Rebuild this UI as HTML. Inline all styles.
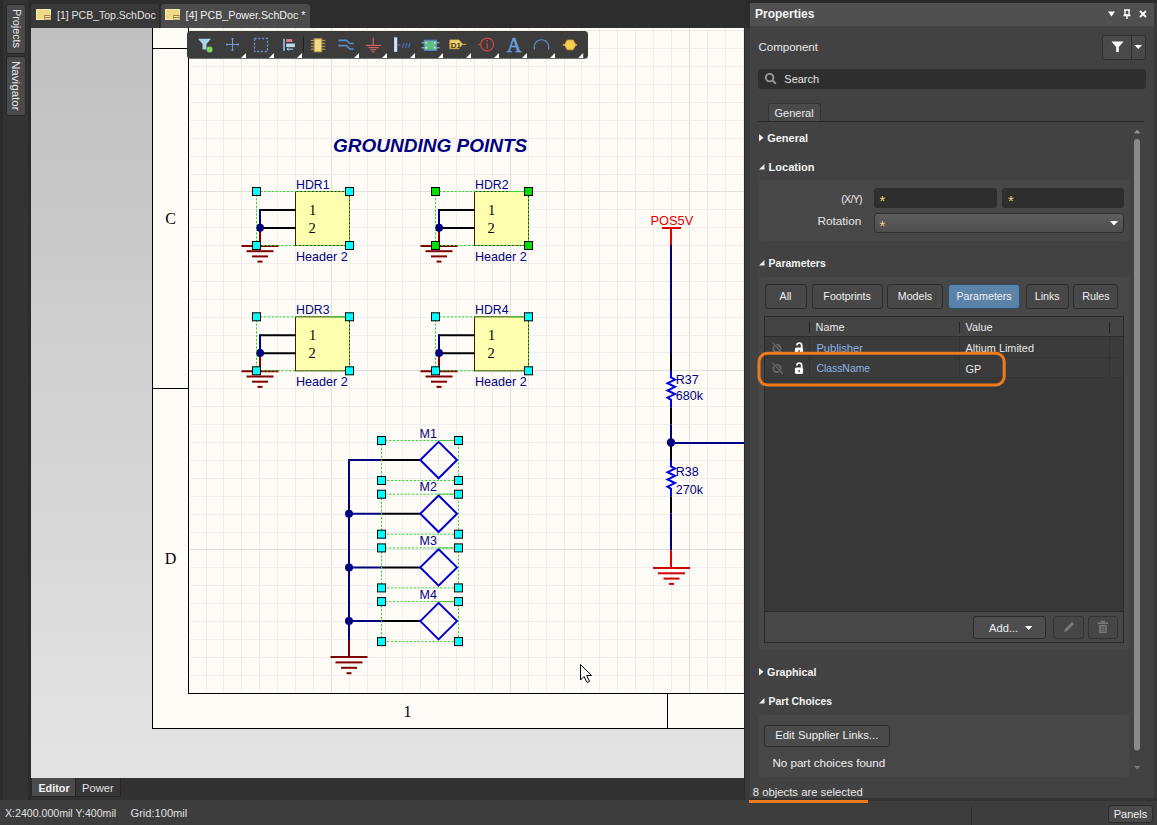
<!DOCTYPE html>
<html><head><meta charset="utf-8">
<style>
*{margin:0;padding:0;box-sizing:border-box}
html,body{width:1157px;height:825px;overflow:hidden;background:#2b2b2b;font-family:"Liberation Sans",sans-serif;color:#e8e8e8}
.a{position:absolute}
.t{position:absolute;white-space:pre;line-height:1}
.b{font-weight:bold}
.btn{position:absolute;background:#474747;border:1px solid #2b2b2b;border-radius:3px;color:#eee;font-size:11px;text-align:center;white-space:pre}
.sec{position:absolute;font-size:11px;font-weight:bold;color:#f2f2f2;white-space:pre;line-height:1}
</style></head><body>
<!-- left strip -->
<div class="a" style="left:0;top:0;width:31px;height:800px;background:#2b2b2b"></div>
<div class="a" style="left:3px;top:0;width:25px;height:800px;background:#333"></div>
<div class="a" style="left:6px;top:4px;width:20px;height:50px;background:#4a4a4a;border:1px solid #262626;border-radius:3px"></div>
<div class="a" style="left:6px;top:56px;width:20px;height:60px;background:#4a4a4a;border:1px solid #262626;border-radius:3px"></div>
<div class="t" style="left:21.5px;top:9px;font-size:10.8px;color:#e6e6e6;transform:rotate(90deg);transform-origin:0 0">Projects</div>
<div class="t" style="left:21.5px;top:60.5px;font-size:11.6px;color:#e6e6e6;transform:rotate(90deg);transform-origin:0 0">Navigator</div>
<!-- tab strip -->
<div class="a" style="left:31px;top:0;width:713px;height:28px;background:#2d2d2d"></div>
<div class="a" style="left:31px;top:4px;width:128px;height:24px;background:#383838;border-radius:3px 3px 0 0"></div>
<div class="a" style="left:161px;top:4px;width:149px;height:24px;background:#4b4b4b;border-radius:3px 3px 0 0"></div>
<svg class="a" style="left:36px;top:9px" width="15" height="11" viewBox="0 0 15 11"><rect x="0.5" y="0.5" width="14" height="10" fill="#efd888" stroke="#f7e9b0" stroke-width="1"/><rect x="8.2" y="6" width="6.3" height="4.5" fill="#9c7e44"/><path d="M9 7.5 H14 M9 9.5 H14" stroke="#f4e4a8" stroke-width="1.1"/></svg>
<div class="t" style="left:57px;top:10px;font-size:10.5px;color:#e4e4e4">[1] PCB_Top.SchDoc</div>
<svg class="a" style="left:165px;top:9px" width="15" height="11" viewBox="0 0 15 11"><rect x="0.5" y="0.5" width="14" height="10" fill="#efd888" stroke="#f7e9b0" stroke-width="1"/><rect x="8.2" y="6" width="6.3" height="4.5" fill="#9c7e44"/><path d="M9 7.5 H14 M9 9.5 H14" stroke="#f4e4a8" stroke-width="1.1"/></svg>
<div class="t" style="left:185.5px;top:10px;font-size:10.7px;color:#f0f0f0">[4] PCB_Power.SchDoc *</div>
<!-- schematic -->
<svg class="a" style="left:31px;top:28px" width="713" height="750" viewBox="31 28 713 750">
<defs><linearGradient id="bg" x1="0" y1="0" x2="0" y2="1"><stop offset="0" stop-color="#c0c0c0"/><stop offset="1" stop-color="#e4e4e4"/></linearGradient></defs>
<rect x="31" y="28" width="713" height="750" fill="url(#bg)"/>
<rect x="152" y="20" width="600" height="709" fill="#fffcf8"/>
<g shape-rendering="crispEdges"><line x1="206.5" y1="28" x2="206.5" y2="693" stroke="#efedea"/><line x1="223.5" y1="28" x2="223.5" y2="693" stroke="#efedea"/><line x1="241.5" y1="28" x2="241.5" y2="693" stroke="#efedea"/><line x1="259.5" y1="28" x2="259.5" y2="693" stroke="#efedea"/><line x1="277.5" y1="28" x2="277.5" y2="693" stroke="#efedea"/><line x1="295.5" y1="28" x2="295.5" y2="693" stroke="#efedea"/><line x1="313.5" y1="28" x2="313.5" y2="693" stroke="#efedea"/><line x1="331.5" y1="28" x2="331.5" y2="693" stroke="#e1dfdb"/><line x1="349.5" y1="28" x2="349.5" y2="693" stroke="#efedea"/><line x1="367.5" y1="28" x2="367.5" y2="693" stroke="#efedea"/><line x1="385.5" y1="28" x2="385.5" y2="693" stroke="#efedea"/><line x1="402.5" y1="28" x2="402.5" y2="693" stroke="#efedea"/><line x1="420.5" y1="28" x2="420.5" y2="693" stroke="#efedea"/><line x1="438.5" y1="28" x2="438.5" y2="693" stroke="#efedea"/><line x1="456.5" y1="28" x2="456.5" y2="693" stroke="#efedea"/><line x1="474.5" y1="28" x2="474.5" y2="693" stroke="#efedea"/><line x1="492.5" y1="28" x2="492.5" y2="693" stroke="#efedea"/><line x1="510.5" y1="28" x2="510.5" y2="693" stroke="#e1dfdb"/><line x1="528.5" y1="28" x2="528.5" y2="693" stroke="#efedea"/><line x1="546.5" y1="28" x2="546.5" y2="693" stroke="#efedea"/><line x1="564.5" y1="28" x2="564.5" y2="693" stroke="#efedea"/><line x1="581.5" y1="28" x2="581.5" y2="693" stroke="#efedea"/><line x1="599.5" y1="28" x2="599.5" y2="693" stroke="#efedea"/><line x1="617.5" y1="28" x2="617.5" y2="693" stroke="#efedea"/><line x1="635.5" y1="28" x2="635.5" y2="693" stroke="#efedea"/><line x1="653.5" y1="28" x2="653.5" y2="693" stroke="#efedea"/><line x1="671.5" y1="28" x2="671.5" y2="693" stroke="#efedea"/><line x1="689.5" y1="28" x2="689.5" y2="693" stroke="#e1dfdb"/><line x1="707.5" y1="28" x2="707.5" y2="693" stroke="#efedea"/><line x1="725.5" y1="28" x2="725.5" y2="693" stroke="#efedea"/><line x1="743.5" y1="28" x2="743.5" y2="693" stroke="#efedea"/><line x1="188" y1="30.5" x2="744" y2="30.5" stroke="#efedea"/><line x1="188" y1="48.5" x2="744" y2="48.5" stroke="#efedea"/><line x1="188" y1="66.5" x2="744" y2="66.5" stroke="#efedea"/><line x1="188" y1="84.5" x2="744" y2="84.5" stroke="#efedea"/><line x1="188" y1="102.5" x2="744" y2="102.5" stroke="#efedea"/><line x1="188" y1="120.5" x2="744" y2="120.5" stroke="#efedea"/><line x1="188" y1="138.5" x2="744" y2="138.5" stroke="#efedea"/><line x1="188" y1="156.5" x2="744" y2="156.5" stroke="#efedea"/><line x1="188" y1="174.5" x2="744" y2="174.5" stroke="#efedea"/><line x1="188" y1="191.5" x2="744" y2="191.5" stroke="#e1dfdb"/><line x1="188" y1="209.5" x2="744" y2="209.5" stroke="#efedea"/><line x1="188" y1="227.5" x2="744" y2="227.5" stroke="#efedea"/><line x1="188" y1="245.5" x2="744" y2="245.5" stroke="#efedea"/><line x1="188" y1="263.5" x2="744" y2="263.5" stroke="#efedea"/><line x1="188" y1="281.5" x2="744" y2="281.5" stroke="#efedea"/><line x1="188" y1="299.5" x2="744" y2="299.5" stroke="#efedea"/><line x1="188" y1="317.5" x2="744" y2="317.5" stroke="#efedea"/><line x1="188" y1="335.5" x2="744" y2="335.5" stroke="#efedea"/><line x1="188" y1="352.5" x2="744" y2="352.5" stroke="#efedea"/><line x1="188" y1="370.5" x2="744" y2="370.5" stroke="#e1dfdb"/><line x1="188" y1="388.5" x2="744" y2="388.5" stroke="#efedea"/><line x1="188" y1="406.5" x2="744" y2="406.5" stroke="#efedea"/><line x1="188" y1="424.5" x2="744" y2="424.5" stroke="#efedea"/><line x1="188" y1="442.5" x2="744" y2="442.5" stroke="#efedea"/><line x1="188" y1="460.5" x2="744" y2="460.5" stroke="#efedea"/><line x1="188" y1="478.5" x2="744" y2="478.5" stroke="#efedea"/><line x1="188" y1="496.5" x2="744" y2="496.5" stroke="#efedea"/><line x1="188" y1="514.5" x2="744" y2="514.5" stroke="#efedea"/><line x1="188" y1="532.5" x2="744" y2="532.5" stroke="#efedea"/><line x1="188" y1="549.5" x2="744" y2="549.5" stroke="#e1dfdb"/><line x1="188" y1="567.5" x2="744" y2="567.5" stroke="#efedea"/><line x1="188" y1="585.5" x2="744" y2="585.5" stroke="#efedea"/><line x1="188" y1="603.5" x2="744" y2="603.5" stroke="#efedea"/><line x1="188" y1="621.5" x2="744" y2="621.5" stroke="#efedea"/><line x1="188" y1="639.5" x2="744" y2="639.5" stroke="#efedea"/><line x1="188" y1="657.5" x2="744" y2="657.5" stroke="#efedea"/><line x1="188" y1="675.5" x2="744" y2="675.5" stroke="#efedea"/></g>
<g stroke="#000" stroke-width="1.3" shape-rendering="crispEdges" fill="none">
<line x1="152.5" y1="20" x2="152.5" y2="728.5"/>
<line x1="152" y1="728.5" x2="744" y2="728.5"/>
<line x1="188.5" y1="20" x2="188.5" y2="693.5"/>
<line x1="188" y1="693.5" x2="744" y2="693.5"/>
<line x1="152" y1="48.5" x2="188" y2="48.5"/>
<line x1="152" y1="388.5" x2="188" y2="388.5"/>
<line x1="667.5" y1="693" x2="667.5" y2="728"/>
</g>
<g font-family="Liberation Serif" font-size="16" fill="#000" text-anchor="middle">
<text x="170.5" y="224">C</text><text x="170.5" y="564">D</text><text x="407.5" y="717">1</text>
</g>
<text x="333" y="151.6" font-family="Liberation Sans" font-weight="bold" font-style="italic" font-size="19" fill="#000080">GROUNDING POINTS</text>
<g transform="translate(0,0)"><rect x="295.5" y="191.5" width="54" height="54" fill="#ffffb0" stroke="#5a1500" stroke-width="1"/><line x1="260" y1="210" x2="295.5" y2="210" stroke="#000" stroke-width="2"/><line x1="260" y1="228" x2="295.5" y2="228" stroke="#000" stroke-width="2"/><line x1="260" y1="209" x2="260" y2="228" stroke="#000080" stroke-width="2"/><line x1="260" y1="227.5" x2="260" y2="246" stroke="#800000" stroke-width="2"/><line x1="241.5" y1="246.0" x2="278.5" y2="246.0" stroke="#800000" stroke-width="2"/><line x1="246.5" y1="251.2" x2="273.5" y2="251.2" stroke="#800000" stroke-width="2"/><line x1="252.0" y1="256.4" x2="268.0" y2="256.4" stroke="#800000" stroke-width="2"/><line x1="257.5" y1="261.6" x2="262.5" y2="261.6" stroke="#800000" stroke-width="2"/><circle cx="260" cy="227.8" r="4" fill="#000080"/><text x="296" y="189" font-family="Liberation Sans" font-size="12.3" fill="#000080">HDR1</text><text x="296" y="260.6" font-family="Liberation Sans" font-size="12.6" fill="#000080">Header 2</text><text x="309" y="214.8" font-family="Liberation Serif" font-size="14.5" fill="#000">1</text><text x="308.5" y="232.7" font-family="Liberation Serif" font-size="14.5" fill="#000">2</text><rect x="256.5" y="191.5" width="93" height="54" fill="none" stroke="#3ccf3c" stroke-width="1" stroke-dasharray="2.3 1.5"/><rect x="252.5" y="187.5" width="8" height="8" fill="#00ffff" stroke="#000" stroke-width="1"/><rect x="345.5" y="187.5" width="8" height="8" fill="#00ffff" stroke="#000" stroke-width="1"/><rect x="252.5" y="241.5" width="8" height="8" fill="#00ffff" stroke="#000" stroke-width="1"/><rect x="345.5" y="241.5" width="8" height="8" fill="#00ffff" stroke="#000" stroke-width="1"/></g>
<g transform="translate(179,0)"><rect x="295.5" y="191.5" width="54" height="54" fill="#ffffb0" stroke="#5a1500" stroke-width="1"/><line x1="260" y1="210" x2="295.5" y2="210" stroke="#000" stroke-width="2"/><line x1="260" y1="228" x2="295.5" y2="228" stroke="#000" stroke-width="2"/><line x1="260" y1="209" x2="260" y2="228" stroke="#000080" stroke-width="2"/><line x1="260" y1="227.5" x2="260" y2="246" stroke="#800000" stroke-width="2"/><line x1="241.5" y1="246.0" x2="278.5" y2="246.0" stroke="#800000" stroke-width="2"/><line x1="246.5" y1="251.2" x2="273.5" y2="251.2" stroke="#800000" stroke-width="2"/><line x1="252.0" y1="256.4" x2="268.0" y2="256.4" stroke="#800000" stroke-width="2"/><line x1="257.5" y1="261.6" x2="262.5" y2="261.6" stroke="#800000" stroke-width="2"/><circle cx="260" cy="227.8" r="4" fill="#000080"/><text x="296" y="189" font-family="Liberation Sans" font-size="12.3" fill="#000080">HDR2</text><text x="296" y="260.6" font-family="Liberation Sans" font-size="12.6" fill="#000080">Header 2</text><text x="309" y="214.8" font-family="Liberation Serif" font-size="14.5" fill="#000">1</text><text x="308.5" y="232.7" font-family="Liberation Serif" font-size="14.5" fill="#000">2</text><rect x="256.5" y="191.5" width="93" height="54" fill="none" stroke="#3ccf3c" stroke-width="1" stroke-dasharray="2.3 1.5"/><line x1="330.5" y1="191.5" x2="346" y2="191.5" stroke="#3ccf3c" stroke-width="1"/><rect x="252.5" y="187.5" width="8" height="8" fill="#00e000" stroke="#000" stroke-width="1"/><rect x="345.5" y="187.5" width="8" height="8" fill="#00e000" stroke="#000" stroke-width="1"/><rect x="252.5" y="241.5" width="8" height="8" fill="#00e000" stroke="#000" stroke-width="1"/><rect x="345.5" y="241.5" width="8" height="8" fill="#00e000" stroke="#000" stroke-width="1"/></g>
<g transform="translate(0,125.3)"><rect x="295.5" y="191.5" width="54" height="54" fill="#ffffb0" stroke="#5a1500" stroke-width="1"/><line x1="260" y1="210" x2="295.5" y2="210" stroke="#000" stroke-width="2"/><line x1="260" y1="228" x2="295.5" y2="228" stroke="#000" stroke-width="2"/><line x1="260" y1="209" x2="260" y2="228" stroke="#000080" stroke-width="2"/><line x1="260" y1="227.5" x2="260" y2="246" stroke="#800000" stroke-width="2"/><line x1="241.5" y1="246.0" x2="278.5" y2="246.0" stroke="#800000" stroke-width="2"/><line x1="246.5" y1="251.2" x2="273.5" y2="251.2" stroke="#800000" stroke-width="2"/><line x1="252.0" y1="256.4" x2="268.0" y2="256.4" stroke="#800000" stroke-width="2"/><line x1="257.5" y1="261.6" x2="262.5" y2="261.6" stroke="#800000" stroke-width="2"/><circle cx="260" cy="227.8" r="4" fill="#000080"/><text x="296" y="189" font-family="Liberation Sans" font-size="12.3" fill="#000080">HDR3</text><text x="296" y="260.6" font-family="Liberation Sans" font-size="12.6" fill="#000080">Header 2</text><text x="309" y="214.8" font-family="Liberation Serif" font-size="14.5" fill="#000">1</text><text x="308.5" y="232.7" font-family="Liberation Serif" font-size="14.5" fill="#000">2</text><rect x="256.5" y="191.5" width="93" height="54" fill="none" stroke="#3ccf3c" stroke-width="1" stroke-dasharray="2.3 1.5"/><line x1="330.5" y1="191.5" x2="346" y2="191.5" stroke="#3ccf3c" stroke-width="1"/><rect x="252.5" y="187.5" width="8" height="8" fill="#00ffff" stroke="#000" stroke-width="1"/><rect x="345.5" y="187.5" width="8" height="8" fill="#00ffff" stroke="#000" stroke-width="1"/><rect x="252.5" y="241.5" width="8" height="8" fill="#00ffff" stroke="#000" stroke-width="1"/><rect x="345.5" y="241.5" width="8" height="8" fill="#00ffff" stroke="#000" stroke-width="1"/></g>
<g transform="translate(179,125.3)"><rect x="295.5" y="191.5" width="54" height="54" fill="#ffffb0" stroke="#5a1500" stroke-width="1"/><line x1="260" y1="210" x2="295.5" y2="210" stroke="#000" stroke-width="2"/><line x1="260" y1="228" x2="295.5" y2="228" stroke="#000" stroke-width="2"/><line x1="260" y1="209" x2="260" y2="228" stroke="#000080" stroke-width="2"/><line x1="260" y1="227.5" x2="260" y2="246" stroke="#800000" stroke-width="2"/><line x1="241.5" y1="246.0" x2="278.5" y2="246.0" stroke="#800000" stroke-width="2"/><line x1="246.5" y1="251.2" x2="273.5" y2="251.2" stroke="#800000" stroke-width="2"/><line x1="252.0" y1="256.4" x2="268.0" y2="256.4" stroke="#800000" stroke-width="2"/><line x1="257.5" y1="261.6" x2="262.5" y2="261.6" stroke="#800000" stroke-width="2"/><circle cx="260" cy="227.8" r="4" fill="#000080"/><text x="296" y="189" font-family="Liberation Sans" font-size="12.3" fill="#000080">HDR4</text><text x="296" y="260.6" font-family="Liberation Sans" font-size="12.6" fill="#000080">Header 2</text><text x="309" y="214.8" font-family="Liberation Serif" font-size="14.5" fill="#000">1</text><text x="308.5" y="232.7" font-family="Liberation Serif" font-size="14.5" fill="#000">2</text><rect x="256.5" y="191.5" width="93" height="54" fill="none" stroke="#3ccf3c" stroke-width="1" stroke-dasharray="2.3 1.5"/><line x1="330.5" y1="191.5" x2="346" y2="191.5" stroke="#3ccf3c" stroke-width="1"/><rect x="252.5" y="187.5" width="8" height="8" fill="#00ffff" stroke="#000" stroke-width="1"/><rect x="345.5" y="187.5" width="8" height="8" fill="#00ffff" stroke="#000" stroke-width="1"/><rect x="252.5" y="241.5" width="8" height="8" fill="#00ffff" stroke="#000" stroke-width="1"/><rect x="345.5" y="241.5" width="8" height="8" fill="#00ffff" stroke="#000" stroke-width="1"/></g>
<line x1="349" y1="459" x2="349" y2="641" stroke="#000080" stroke-width="2"/>
<line x1="349" y1="640" x2="349" y2="657" stroke="#800000" stroke-width="2"/>
<line x1="330.5" y1="657.0" x2="367.5" y2="657.0" stroke="#800000" stroke-width="2"/><line x1="335.5" y1="662.4" x2="362.5" y2="662.4" stroke="#800000" stroke-width="2"/><line x1="341.0" y1="667.8" x2="357.0" y2="667.8" stroke="#800000" stroke-width="2"/><line x1="346.5" y1="673.2" x2="351.5" y2="673.2" stroke="#800000" stroke-width="2"/>
<g transform="translate(0,0.0)"><line x1="349" y1="460" x2="382" y2="460" stroke="#000080" stroke-width="2"/><line x1="381.5" y1="460" x2="420.5" y2="460" stroke="#000" stroke-width="2"/><path d="M420.3 460 L438.6 441.8 L457 460 L438.6 478.3 Z" fill="none" stroke="#0000d0" stroke-width="2"/><text x="419.6" y="437.7" font-family="Liberation Sans" font-size="12.5" fill="#000080">M1</text><rect x="381.5" y="440.5" width="77" height="40" fill="none" stroke="#3ccf3c" stroke-width="1" stroke-dasharray="2.3 1.5"/><line x1="438.6" y1="440.5" x2="455" y2="440.5" stroke="#3ccf3c" stroke-width="1"/><rect x="377.5" y="436.5" width="8" height="8" fill="#00ffff" stroke="#000" stroke-width="1"/><rect x="454.5" y="436.5" width="8" height="8" fill="#00ffff" stroke="#000" stroke-width="1"/><rect x="377.5" y="476.5" width="8" height="8" fill="#00ffff" stroke="#000" stroke-width="1"/><rect x="454.5" y="476.5" width="8" height="8" fill="#00ffff" stroke="#000" stroke-width="1"/></g>
<g transform="translate(0,53.7)"><line x1="349" y1="460" x2="382" y2="460" stroke="#000080" stroke-width="2"/><line x1="381.5" y1="460" x2="420.5" y2="460" stroke="#000" stroke-width="2"/><path d="M420.3 460 L438.6 441.8 L457 460 L438.6 478.3 Z" fill="none" stroke="#0000d0" stroke-width="2"/><text x="419.6" y="437.7" font-family="Liberation Sans" font-size="12.5" fill="#000080">M2</text><rect x="381.5" y="440.5" width="77" height="40" fill="none" stroke="#3ccf3c" stroke-width="1" stroke-dasharray="2.3 1.5"/><line x1="438.6" y1="440.5" x2="455" y2="440.5" stroke="#3ccf3c" stroke-width="1"/><rect x="377.5" y="436.5" width="8" height="8" fill="#00ffff" stroke="#000" stroke-width="1"/><rect x="454.5" y="436.5" width="8" height="8" fill="#00ffff" stroke="#000" stroke-width="1"/><rect x="377.5" y="476.5" width="8" height="8" fill="#00ffff" stroke="#000" stroke-width="1"/><rect x="454.5" y="476.5" width="8" height="8" fill="#00ffff" stroke="#000" stroke-width="1"/></g>
<g transform="translate(0,107.4)"><line x1="349" y1="460" x2="382" y2="460" stroke="#000080" stroke-width="2"/><line x1="381.5" y1="460" x2="420.5" y2="460" stroke="#000" stroke-width="2"/><path d="M420.3 460 L438.6 441.8 L457 460 L438.6 478.3 Z" fill="none" stroke="#0000d0" stroke-width="2"/><text x="419.6" y="437.7" font-family="Liberation Sans" font-size="12.5" fill="#000080">M3</text><rect x="381.5" y="440.5" width="77" height="40" fill="none" stroke="#3ccf3c" stroke-width="1" stroke-dasharray="2.3 1.5"/><line x1="438.6" y1="440.5" x2="455" y2="440.5" stroke="#3ccf3c" stroke-width="1"/><rect x="377.5" y="436.5" width="8" height="8" fill="#00ffff" stroke="#000" stroke-width="1"/><rect x="454.5" y="436.5" width="8" height="8" fill="#00ffff" stroke="#000" stroke-width="1"/><rect x="377.5" y="476.5" width="8" height="8" fill="#00ffff" stroke="#000" stroke-width="1"/><rect x="454.5" y="476.5" width="8" height="8" fill="#00ffff" stroke="#000" stroke-width="1"/></g>
<g transform="translate(0,161.10000000000002)"><line x1="349" y1="460" x2="382" y2="460" stroke="#000080" stroke-width="2"/><line x1="381.5" y1="460" x2="420.5" y2="460" stroke="#000" stroke-width="2"/><path d="M420.3 460 L438.6 441.8 L457 460 L438.6 478.3 Z" fill="none" stroke="#0000d0" stroke-width="2"/><text x="419.6" y="437.7" font-family="Liberation Sans" font-size="12.5" fill="#000080">M4</text><rect x="381.5" y="440.5" width="77" height="40" fill="none" stroke="#3ccf3c" stroke-width="1" stroke-dasharray="2.3 1.5"/><line x1="438.6" y1="440.5" x2="455" y2="440.5" stroke="#3ccf3c" stroke-width="1"/><rect x="377.5" y="436.5" width="8" height="8" fill="#00ffff" stroke="#000" stroke-width="1"/><rect x="454.5" y="436.5" width="8" height="8" fill="#00ffff" stroke="#000" stroke-width="1"/><rect x="377.5" y="476.5" width="8" height="8" fill="#00ffff" stroke="#000" stroke-width="1"/><rect x="454.5" y="476.5" width="8" height="8" fill="#00ffff" stroke="#000" stroke-width="1"/></g>
<circle cx="349" cy="513.7" r="4" fill="#000080"/>
<circle cx="349" cy="567.4" r="4" fill="#000080"/>
<circle cx="349" cy="621.1" r="4" fill="#000080"/>
<text x="650.5" y="225.1" font-family="Liberation Sans" font-size="12.8" fill="#e00000">POS5V</text>
<line x1="662" y1="228" x2="681" y2="228" stroke="#e00000" stroke-width="2"/>
<line x1="671" y1="227" x2="671" y2="245" stroke="#e00000" stroke-width="2"/>
<line x1="671" y1="245" x2="671" y2="354" stroke="#000080" stroke-width="2"/>
<g transform="translate(0,0)"><line x1="671" y1="353.6" x2="671" y2="371" stroke="#000" stroke-width="2"/><path d="M671 370.7 L671 377.5 L675 379.6 L667.5 383.2 L675 386.8 L667.5 390.5 L675 394.1 L667.5 397.7 L671 399.8 L671 407.3" fill="none" stroke="#0000e8" stroke-width="2" stroke-linejoin="miter"/><line x1="671" y1="407.2" x2="671" y2="424.5" stroke="#000" stroke-width="2"/><text x="675.8" y="383.6" font-family="Liberation Sans" font-size="12.5" fill="#000080">R37</text><text x="675.8" y="399.6" font-family="Liberation Sans" font-size="12.5" fill="#000080">680k</text></g>
<line x1="671" y1="424.5" x2="671" y2="442.5" stroke="#000080" stroke-width="2"/>
<line x1="671" y1="443" x2="744" y2="443" stroke="#000080" stroke-width="2"/>
<g transform="translate(0,89)"><line x1="671" y1="353.6" x2="671" y2="371" stroke="#000" stroke-width="2"/><path d="M671 370.7 L671 377.5 L675 379.6 L667.5 383.2 L675 386.8 L667.5 390.5 L675 394.1 L667.5 397.7 L671 399.8 L671 407.3" fill="none" stroke="#0000e8" stroke-width="2" stroke-linejoin="miter"/><line x1="671" y1="407.2" x2="671" y2="424.5" stroke="#000" stroke-width="2"/><text x="675.8" y="386.6" font-family="Liberation Sans" font-size="12.5" fill="#000080">R38</text><text x="675.8" y="404.6" font-family="Liberation Sans" font-size="12.5" fill="#000080">270k</text></g>
<line x1="671" y1="513.5" x2="671" y2="550.3" stroke="#000080" stroke-width="2"/>
<line x1="671" y1="550.3" x2="671" y2="568" stroke="#e00000" stroke-width="2"/>
<circle cx="671" cy="442.5" r="4.2" fill="#000080"/>
<line x1="653.0" y1="568.0" x2="690.0" y2="568.0" stroke="#d00000" stroke-width="2"/><line x1="658.0" y1="573.3" x2="685.0" y2="573.3" stroke="#d00000" stroke-width="2"/><line x1="663.5" y1="578.6" x2="679.5" y2="578.6" stroke="#d00000" stroke-width="2"/><line x1="669.0" y1="583.9" x2="674.0" y2="583.9" stroke="#d00000" stroke-width="2"/>
<path d="M580.5 664.5 L580.5 680 L584 676.5 L587 682.5 L589.5 681.3 L586.7 675.5 L591.5 675.5 Z" fill="#fff" stroke="#000" stroke-width="1" stroke-linejoin="round"/>
</svg>
<svg class="a" style="left:187px;top:31px" width="401" height="28" viewBox="187 31 401 28">
<rect x="187" y="31" width="401" height="27.7" rx="3.5" fill="#3c3c3c"/>
<!-- filter -->
<path d="M198 38.8 H211 L206.5 44 V49.5 H202.5 V44 Z" fill="#a8d4e6"/>
<circle cx="209.6" cy="49.6" r="3" fill="#7ed957"/>
<!-- move cross -->
<g stroke="#7b9ad2" stroke-width="1" fill="none"><line x1="226" y1="44.5" x2="239" y2="44.5"/><line x1="232.5" y1="38" x2="232.5" y2="51"/><path d="M227.3 43.3 L226 44.5 L227.3 45.7 M237.7 43.3 L239 44.5 L237.7 45.7 M231.3 39.3 L232.5 38 L233.7 39.3 M231.3 49.7 L232.5 51 L233.7 49.7"/></g>
<path d="M246 58 L246 53 L241 58 Z" fill="#fff"/>
<!-- dashed rect -->
<rect x="254.5" y="38.5" width="13" height="13" fill="none" stroke="#6d8fd0" stroke-width="1.3" stroke-dasharray="2.2 1.6"/>
<path d="M274 58 L274 53 L269 58 Z" fill="#fff"/>
<!-- align -->
<rect x="283" y="38.8" width="2" height="12" fill="#8aa2c4"/>
<rect x="286.2" y="39.1" width="6" height="2.8" fill="#e57e8c"/>
<rect x="286.2" y="43.5" width="8.7" height="3.6" fill="#b6dcec"/>
<path d="M287 49.2 H293 M287 49.2 L288.5 48 M287 49.2 L288.5 50.4" stroke="#b6dcec" stroke-width="1" fill="none"/>
<path d="M302 58 L302 53 L297 58 Z" fill="#fff"/>
<line x1="303.5" y1="36.7" x2="303.5" y2="52.8" stroke="#1e1e1e" stroke-width="1"/>
<!-- component -->
<g stroke="#c8a850" stroke-width="1"><line x1="310.8" y1="40.4" x2="325.3" y2="40.4"/><line x1="310.8" y1="43.3" x2="325.3" y2="43.3"/><line x1="310.8" y1="46.3" x2="325.3" y2="46.3"/><line x1="310.8" y1="49.2" x2="325.3" y2="49.2"/></g>
<rect x="314.2" y="38.8" width="7.5" height="13" fill="#f3d889" stroke="#b89a4a" stroke-width="1"/>
<!-- wire -->
<path d="M338.3 40.4 H346.6 L349.7 43.5 H353.8 M338.3 45.6 H346.6 L349.7 49 H353.8" stroke="#5a8cc4" stroke-width="1.6" fill="none"/>
<path d="M359 58 L359 53 L354 58 Z" fill="#fff"/>
<!-- gnd -->
<g stroke="#e06060" stroke-width="1.1"><line x1="373.2" y1="37.8" x2="373.2" y2="45.4"/><line x1="365.8" y1="45.4" x2="381.3" y2="45.4"/><line x1="368.4" y1="47.6" x2="378.7" y2="47.6"/><line x1="370.4" y1="49.7" x2="376.1" y2="49.7"/><line x1="372" y1="51.8" x2="374.6" y2="51.8"/></g>
<path d="M387 58 L387 53 L382 58 Z" fill="#fff"/>
<!-- bus entry -->
<rect x="394.1" y="37.3" width="3.1" height="14.5" fill="#cfe4fa"/>
<line x1="397.2" y1="45" x2="400.5" y2="45" stroke="#5a7cc0" stroke-width="1"/>
<path d="M402.5 47.6 L404 43 M405.5 47.6 L407 43 M408.5 47.6 L410 43" stroke="#4a6ab8" stroke-width="1.3" fill="none"/>
<path d="M415 58 L415 53 L410 58 Z" fill="#fff"/>
<!-- sheet symbol -->
<rect x="424.3" y="40.3" width="12.2" height="10" fill="#5fbf7f" stroke="#5a88c8" stroke-width="1.2"/>
<path d="M421.5 42.8 H424.5 M421.5 47.8 H424.5 M436.5 42.8 H439.5 M436.5 47.8 H439.5" stroke="#9cc4e8" stroke-width="1"/>
<path d="M425.5 41.5 L427.5 42.8 L425.5 44 Z M425.5 46.5 L427.5 47.8 L425.5 49 Z M435.5 41.5 L433.5 42.8 L435.5 44 Z M435.5 46.5 L433.5 47.8 L435.5 49 Z" fill="#e8f4ff"/>
<path d="M443 58 L443 53 L438 58 Z" fill="#fff"/>
<!-- port D1 -->
<path d="M449.8 39.9 H459 L462.5 44.3 L459 48.7 H449.8 Z" fill="#f1d06e" stroke="#c9a648" stroke-width="0.8"/>
<line x1="462.5" y1="44.3" x2="466" y2="44.3" stroke="#e0b850" stroke-width="1"/>
<text x="450.8" y="47.8" font-family="Liberation Sans" font-weight="bold" font-size="8" fill="#4a3a10">D1</text>
<path d="M471 58 L471 53 L466 58 Z" fill="#fff"/>
<!-- info -->
<circle cx="487.2" cy="44.5" r="6.4" fill="none" stroke="#d84848" stroke-width="1.1"/>
<line x1="478.4" y1="44.5" x2="480.8" y2="44.5" stroke="#d84848" stroke-width="1.1"/>
<line x1="487.2" y1="43.2" x2="487.2" y2="48.5" stroke="#d84848" stroke-width="1.3"/>
<circle cx="487.2" cy="40.9" r="0.8" fill="#d84848"/>
<path d="M499 58 L499 53 L494 58 Z" fill="#fff"/>
<!-- A -->
<text x="506.8" y="51.8" font-family="Liberation Serif" font-size="20.5" stroke="#6aa2e2" stroke-width="0.5" fill="#6aa2e2">A</text>
<path d="M527 58 L527 53 L522 58 Z" fill="#fff"/>
<!-- arc -->
<path d="M534.6 49.5 A7.3 7.3 0 1 1 548.4 49.5" fill="none" stroke="#5c8cc4" stroke-width="1.1"/>
<path d="M555 58 L555 53 L550 58 Z" fill="#fff"/>
<!-- junction -->
<line x1="562.8" y1="44.9" x2="577.1" y2="44.9" stroke="#f0a848" stroke-width="1.6"/>
<path d="M567.3 40 H573.1 L575.9 44.9 L573.1 49.8 H567.3 L564.5 44.9 Z" fill="#f7cd52" stroke="#e8a040" stroke-width="0.8"/>
<path d="M583.2 58 L583.2 53 L578.2 58 Z" fill="#fff"/>
</svg>
<!-- bottom tabs bar -->
<div class="a" style="left:31px;top:778px;width:713px;height:22px;background:#323232"></div>
<div class="a" style="left:31px;top:778px;width:45px;height:19px;background:#4b4b4b;border:1px solid #262626;border-top:none"></div>
<div class="a" style="left:75px;top:778px;width:46px;height:19px;background:#363636;border:1px solid #262626;border-top:none"></div>
<div class="t b" style="left:38.4px;top:783.4px;font-size:10.8px;color:#f4f4f4">Editor</div>
<div class="t" style="left:82px;top:783.4px;font-size:11.2px;color:#e4e4e4">Power</div>
<!-- status bar -->
<div class="a" style="left:0;top:800px;width:1157px;height:25px;background:#3d3d3d"></div>
<div class="t" style="left:5px;top:807.5px;font-size:10.6px;color:#e0e0e0">X:2400.000mil Y:400mil</div>
<div class="t" style="left:130.5px;top:807.5px;font-size:11.1px;color:#e0e0e0">Grid:100mil</div>
<div class="a" style="left:971px;top:805px;width:1px;height:20px;background:#2e2e2e"></div>
<div class="btn" style="left:1108px;top:805px;width:45px;height:18px;line-height:16px;background:#4a4a4a">Panels</div>
<!-- right gap -->
<div class="a" style="left:744px;top:0;width:6px;height:800px;background:#2b2b2b"></div>
<div class="a" style="left:745px;top:28px;width:5px;height:772px;background:#3a3a3a"></div>
<!-- panel -->
<div class="a" style="left:1154px;top:3px;width:3px;height:797px;background:#393939"></div>
<div class="a" style="left:750px;top:3px;width:404px;height:796px;background:#424242"></div>
<div class="a" style="left:750px;top:3px;width:404px;height:23px;background:#505050"></div>
<div class="t b" style="left:755px;top:8px;font-size:12px;color:#f4f4f4">Properties</div>
<svg class="a" style="left:1105px;top:8px" width="45" height="14" viewBox="1105 8 45 14">
<path d="M1108 11.5 H1115 L1111.5 16.5 Z" fill="#fff"/>
<path d="M1124 10 H1130 M1125 10 V15 H1129 V10 M1123.5 15.5 H1130.5 M1127 15.5 V19" stroke="#fff" stroke-width="1.4" fill="none"/>
<path d="M1140 11 L1146 17 M1146 11 L1140 17" stroke="#fff" stroke-width="1.8"/>
</svg>
<div class="t" style="left:758.5px;top:42px;font-size:11.5px;color:#eaeaea">Component</div>
<div class="a" style="left:1102px;top:34.5px;width:43.5px;height:25px;background:#4a4a4a;border:1px solid #2e2e2e;border-radius:3px"></div>
<div class="a" style="left:1131px;top:35px;width:1px;height:24px;background:#2e2e2e"></div>
<svg class="a" style="left:1102px;top:34px" width="44" height="26" viewBox="1102 34 44 26"><path d="M1111.5 41.5 H1123.5 L1118.8 47 V52 H1116.2 V47 Z" fill="#fff"/><path d="M1134.5 45 H1142 L1138.25 49 Z" fill="#fff"/></svg>
<div class="a" style="left:758px;top:69px;width:387.5px;height:19.5px;background:#2e2e2e;border-radius:3px"></div>
<svg class="a" style="left:764px;top:72px" width="14" height="14" viewBox="0 0 14 14"><circle cx="5.6" cy="5.6" r="3.8" fill="none" stroke="#9a9a9a" stroke-width="1.8"/><line x1="8.4" y1="8.4" x2="11.8" y2="11.8" stroke="#9a9a9a" stroke-width="2"/></svg>
<div class="t" style="left:784.3px;top:74px;font-size:11px;color:#e6e6e6">Search</div>
<div class="a" style="left:767.5px;top:103.3px;width:53px;height:18.5px;background:#4a4a4a;border:1px solid #333;border-bottom:none;border-radius:3px 3px 0 0"></div>
<div class="t" style="left:774.5px;top:107.5px;font-size:11px;color:#ececec">General</div>
<div class="a" style="left:758px;top:121px;width:386px;height:1px;background:#2a2a2a"></div>
<svg class="a" style="left:759px;top:134.3px" width="5" height="8" viewBox="0 0 5 8"><path d="M0 0 L4.5 3.8 L0 7.6 Z" fill="#f0f0f0"/></svg>
<div class="t" style="left:767.2px;top:132.7px;font-size:11px;color:#f4f4f4;font-weight:bold;">General</div>
<svg class="a" style="left:759px;top:163.8px" width="6" height="6" viewBox="0 0 6 6"><path d="M5.5 0 V5.5 H0 Z" fill="#f0f0f0"/></svg>
<div class="t" style="left:768.6px;top:161.7px;font-size:11px;color:#f4f4f4;font-weight:bold;">Location</div>
<div class="a" style="left:758px;top:180px;width:372px;height:61px;background:#474747;border-radius:3px"></div>
<div class="t" style="left:841.3px;top:193.7px;font-size:10.6px;color:#e8e8e8;letter-spacing:-0.7px">(X/Y)</div>
<div class="t" style="left:817.4px;top:216.0px;font-size:11.8px;color:#e8e8e8;">Rotation</div>
<div class="a" style="left:874px;top:188px;width:122.5px;height:20px;background:#2e2e2e;border-radius:3px"></div>
<div class="a" style="left:1001.5px;top:188px;width:122px;height:20px;background:#2e2e2e;border-radius:3px"></div>
<div class="t" style="left:879.5px;top:193px;font-size:15px;color:#e8d58a;">*</div>
<div class="t" style="left:1008px;top:193px;font-size:15px;color:#e8d58a;">*</div>
<div class="a" style="left:874px;top:212.5px;width:249.5px;height:20px;background:linear-gradient(#5e5e5e,#4d4d4d);border:1px solid #2f2f2f;border-radius:3px"></div>
<div class="t" style="left:879.5px;top:217.5px;font-size:15px;color:#e8d58a;">*</div>
<svg class="a" style="left:1110px;top:221px" width="9" height="5" viewBox="0 0 9 5"><path d="M0 0 H8 L4 4.5 Z" fill="#fff"/></svg>
<svg class="a" style="left:759px;top:260px" width="6" height="6" viewBox="0 0 6 6"><path d="M5.5 0 V5.5 H0 Z" fill="#f0f0f0"/></svg>
<div class="t" style="left:768.6px;top:257.9px;font-size:10.5px;color:#f4f4f4;font-weight:bold;">Parameters</div>
<div class="a" style="left:758px;top:276.5px;width:372px;height:373px;background:#474747;border-radius:3px"></div>
<div class="a" style="left:764.5px;top:284px;width:42.0px;height:25px;background:#474747;border:1px solid #2b2b2b;border-radius:3px;color:#f0f0f0;font-size:10.7px;line-height:22.5px;text-align:center;white-space:pre">All</div>
<div class="a" style="left:811.7px;top:284px;width:70.89999999999998px;height:25px;background:#474747;border:1px solid #2b2b2b;border-radius:3px;color:#f0f0f0;font-size:10.7px;line-height:22.5px;text-align:center;white-space:pre">Footprints</div>
<div class="a" style="left:887.4px;top:284px;width:55.200000000000045px;height:25px;background:#474747;border:1px solid #2b2b2b;border-radius:3px;color:#f0f0f0;font-size:10.7px;line-height:22.5px;text-align:center;white-space:pre">Models</div>
<div class="a" style="left:947.8px;top:284px;width:72.60000000000002px;height:25px;background:#5b82a8;border:1px solid #2f4a66;border-radius:3px;color:#f0f0f0;font-size:10.7px;line-height:22.5px;text-align:center;white-space:pre">Parameters</div>
<div class="a" style="left:1025.6px;top:284px;width:43.200000000000045px;height:25px;background:#474747;border:1px solid #2b2b2b;border-radius:3px;color:#f0f0f0;font-size:10.7px;line-height:22.5px;text-align:center;white-space:pre">Links</div>
<div class="a" style="left:1073.4px;top:284px;width:45.0px;height:25px;background:#474747;border:1px solid #2b2b2b;border-radius:3px;color:#f0f0f0;font-size:10.7px;line-height:22.5px;text-align:center;white-space:pre">Rules</div>
<div class="a" style="left:764px;top:316.3px;width:359.6px;height:295.4px;background:#383838;border:1px solid #2a2a2a"></div>
<div class="a" style="left:765px;top:317.3px;width:357.6px;height:19px;background:#444444;"></div>
<div class="a" style="left:765px;top:336.2px;width:357.6px;height:1px;background:#2c2c2c;"></div>
<div class="a" style="left:809.3px;top:321.5px;width:1px;height:11px;background:#252525;"></div>
<div class="a" style="left:959.4px;top:321.5px;width:1px;height:11px;background:#252525;"></div>
<div class="a" style="left:1108.5px;top:321.5px;width:1px;height:11px;background:#252525;"></div>
<div class="t" style="left:815.6px;top:321.8px;font-size:10.8px;color:#e8e8e8;">Name</div>
<div class="t" style="left:965.6px;top:321.8px;font-size:10.8px;color:#e8e8e8;">Value</div>
<div class="a" style="left:765px;top:337.2px;width:357.6px;height:19.8px;background:#3b3b3b;"></div>
<div class="a" style="left:765px;top:357px;width:357.6px;height:1px;background:#353535;"></div>
<div class="a" style="left:765px;top:358px;width:357.6px;height:19px;background:#3b3b3b;"></div>
<div class="a" style="left:765px;top:377px;width:357.6px;height:1px;background:#353535;"></div>
<div class="a" style="left:809.3px;top:337px;width:1px;height:40px;background:#333;"></div>
<div class="a" style="left:959.4px;top:337px;width:1px;height:40px;background:#333;"></div>
<div class="a" style="left:1108.5px;top:337px;width:1px;height:40px;background:#333;"></div>
<div class="t" style="left:816.4px;top:343.4px;font-size:11.2px;color:#8db4e6;">Publisher</div>
<div class="t" style="left:965.6px;top:343.4px;font-size:10.9px;color:#e8e8e8;">Altium Limited</div>
<svg class="a" style="left:771px;top:342.2px" width="13" height="12" viewBox="0 0 13 12"><circle cx="6" cy="6.5" r="3.6" fill="none" stroke="#6a6a6a" stroke-width="1.8"/><circle cx="6.6" cy="5.6" r="1" fill="#6a6a6a"/><line x1="1.3" y1="0.5" x2="11.7" y2="11.7" stroke="#3b3b3b" stroke-width="2.4"/><line x1="1.3" y1="0.5" x2="11.7" y2="11.7" stroke="#707070" stroke-width="1.1"/></svg>
<svg class="a" style="left:794px;top:342.2px" width="10" height="12" viewBox="0 0 10 12"><path d="M2.9 3.4 A2.4 2.4 0 0 1 7.7 3.4 V6" fill="none" stroke="#fff" stroke-width="1.7"/><rect x="0.9" y="5.4" width="8.2" height="6.5" rx="1.6" fill="#fff"/><circle cx="5.1" cy="9" r="0.9" fill="#3b3b3b"/></svg>
<div class="t" style="left:816.4px;top:363.5px;font-size:10.4px;color:#8db4e6;">ClassName</div>
<div class="t" style="left:965.6px;top:363.5px;font-size:10.9px;color:#e8e8e8;">GP</div>
<svg class="a" style="left:771px;top:362.3px" width="13" height="12" viewBox="0 0 13 12"><circle cx="6" cy="6.5" r="3.6" fill="none" stroke="#6a6a6a" stroke-width="1.8"/><circle cx="6.6" cy="5.6" r="1" fill="#6a6a6a"/><line x1="1.3" y1="0.5" x2="11.7" y2="11.7" stroke="#3b3b3b" stroke-width="2.4"/><line x1="1.3" y1="0.5" x2="11.7" y2="11.7" stroke="#707070" stroke-width="1.1"/></svg>
<svg class="a" style="left:794px;top:362.3px" width="10" height="12" viewBox="0 0 10 12"><path d="M2.9 3.4 A2.4 2.4 0 0 1 7.7 3.4 V6" fill="none" stroke="#fff" stroke-width="1.7"/><rect x="0.9" y="5.4" width="8.2" height="6.5" rx="1.6" fill="#fff"/><circle cx="5.1" cy="9" r="0.9" fill="#3b3b3b"/></svg>
<div class="a" style="left:764px;top:611.5px;width:359.6px;height:31.5px;background:#474747;border:1px solid #2a2a2a;border-top:none"></div>
<div class="a" style="left:972.8px;top:616.3px;width:73.5px;height:22.5px;background:#4d4d4d;border:1px solid #2b2b2b;border-radius:3px"></div>
<div class="t" style="left:989px;top:622.7px;font-size:11.2px;color:#f0f0f0;">Add...</div>
<svg class="a" style="left:1025px;top:626px" width="8" height="5" viewBox="0 0 8 5"><path d="M0 0 H7.4 L3.7 4 Z" fill="#fff"/></svg>
<div class="a" style="left:1053.3px;top:616.3px;width:30.4px;height:22.5px;background:#464646;border:1px solid #333;border-radius:3px"></div>
<div class="a" style="left:1088.3px;top:616.3px;width:30.1px;height:22.5px;background:#464646;border:1px solid #333;border-radius:3px"></div>
<svg class="a" style="left:1062px;top:620px" width="14" height="14" viewBox="0 0 14 14"><path d="M2 12 L3 9 L10 2 L12 4 L5 11 Z" fill="#7a7a7a"/></svg>
<svg class="a" style="left:1097px;top:620px" width="12" height="14" viewBox="0 0 12 14"><rect x="1" y="2.5" width="10" height="1.6" fill="#7a7a7a"/><rect x="4" y="0.8" width="4" height="1.6" fill="#7a7a7a"/><rect x="2.2" y="5" width="7.6" height="8" fill="#7a7a7a"/><path d="M4.3 6 V12 M6 6 V12 M7.7 6 V12" stroke="#464646" stroke-width="0.8"/></svg>
<svg class="a" style="left:759px;top:667.8px" width="5" height="8" viewBox="0 0 5 8"><path d="M0 0 L4.5 3.8 L0 7.6 Z" fill="#f0f0f0"/></svg>
<div class="t" style="left:767.1px;top:666.5px;font-size:10.7px;color:#f4f4f4;font-weight:bold;">Graphical</div>
<svg class="a" style="left:759px;top:698.3px" width="6" height="6" viewBox="0 0 6 6"><path d="M5.5 0 V5.5 H0 Z" fill="#f0f0f0"/></svg>
<div class="t" style="left:768.5px;top:696.7px;font-size:10.4px;color:#f4f4f4;font-weight:bold;">Part Choices</div>
<div class="a" style="left:758px;top:714.6px;width:372.3px;height:62.5px;background:#474747;border-radius:3px"></div>
<div class="a" style="left:764.2px;top:724.6px;width:125.4px;height:22px;background:#4a4a4a;border:1px solid #2b2b2b;border-radius:3px"></div>
<div class="t" style="left:775.3px;top:730.2px;font-size:11.3px;color:#f0f0f0;">Edit Supplier Links...</div>
<div class="t" style="left:772.4px;top:756.7px;font-size:11.6px;color:#f0f0f0;">No part choices found</div>
<svg class="a" style="left:1132px;top:126px" width="12" height="650" viewBox="1132 126 12 650"><path d="M1134 133.2 H1140.4 L1137.2 129.8 Z" fill="#9a9a9a"/><rect x="1134" y="138.9" width="6" height="611.5" rx="3" fill="#8a8a8a"/><path d="M1134 766 H1140.4 L1137.2 769.4 Z" fill="#7a7a7a"/></svg>
<div class="a" style="left:750px;top:778px;width:404px;height:22px;background:#424242;"></div>
<div class="t" style="left:752.8px;top:787.2px;font-size:11.3px;color:#e8e8e8;">8 objects are selected</div>
<div class="a" style="left:750px;top:798px;width:407px;height:3px;background:#333333;"></div>
<div class="a" style="left:749.3px;top:799.7px;width:118.6px;height:3px;background:#f07a1a;"></div>
<svg class="a" style="left:755px;top:349px" width="254" height="42" viewBox="755 349 254 42"><rect x="759" y="353.2" width="245.2" height="31.8" rx="8.5" fill="none" stroke="#f07a1a" stroke-width="3"/></svg>
</body></html>
